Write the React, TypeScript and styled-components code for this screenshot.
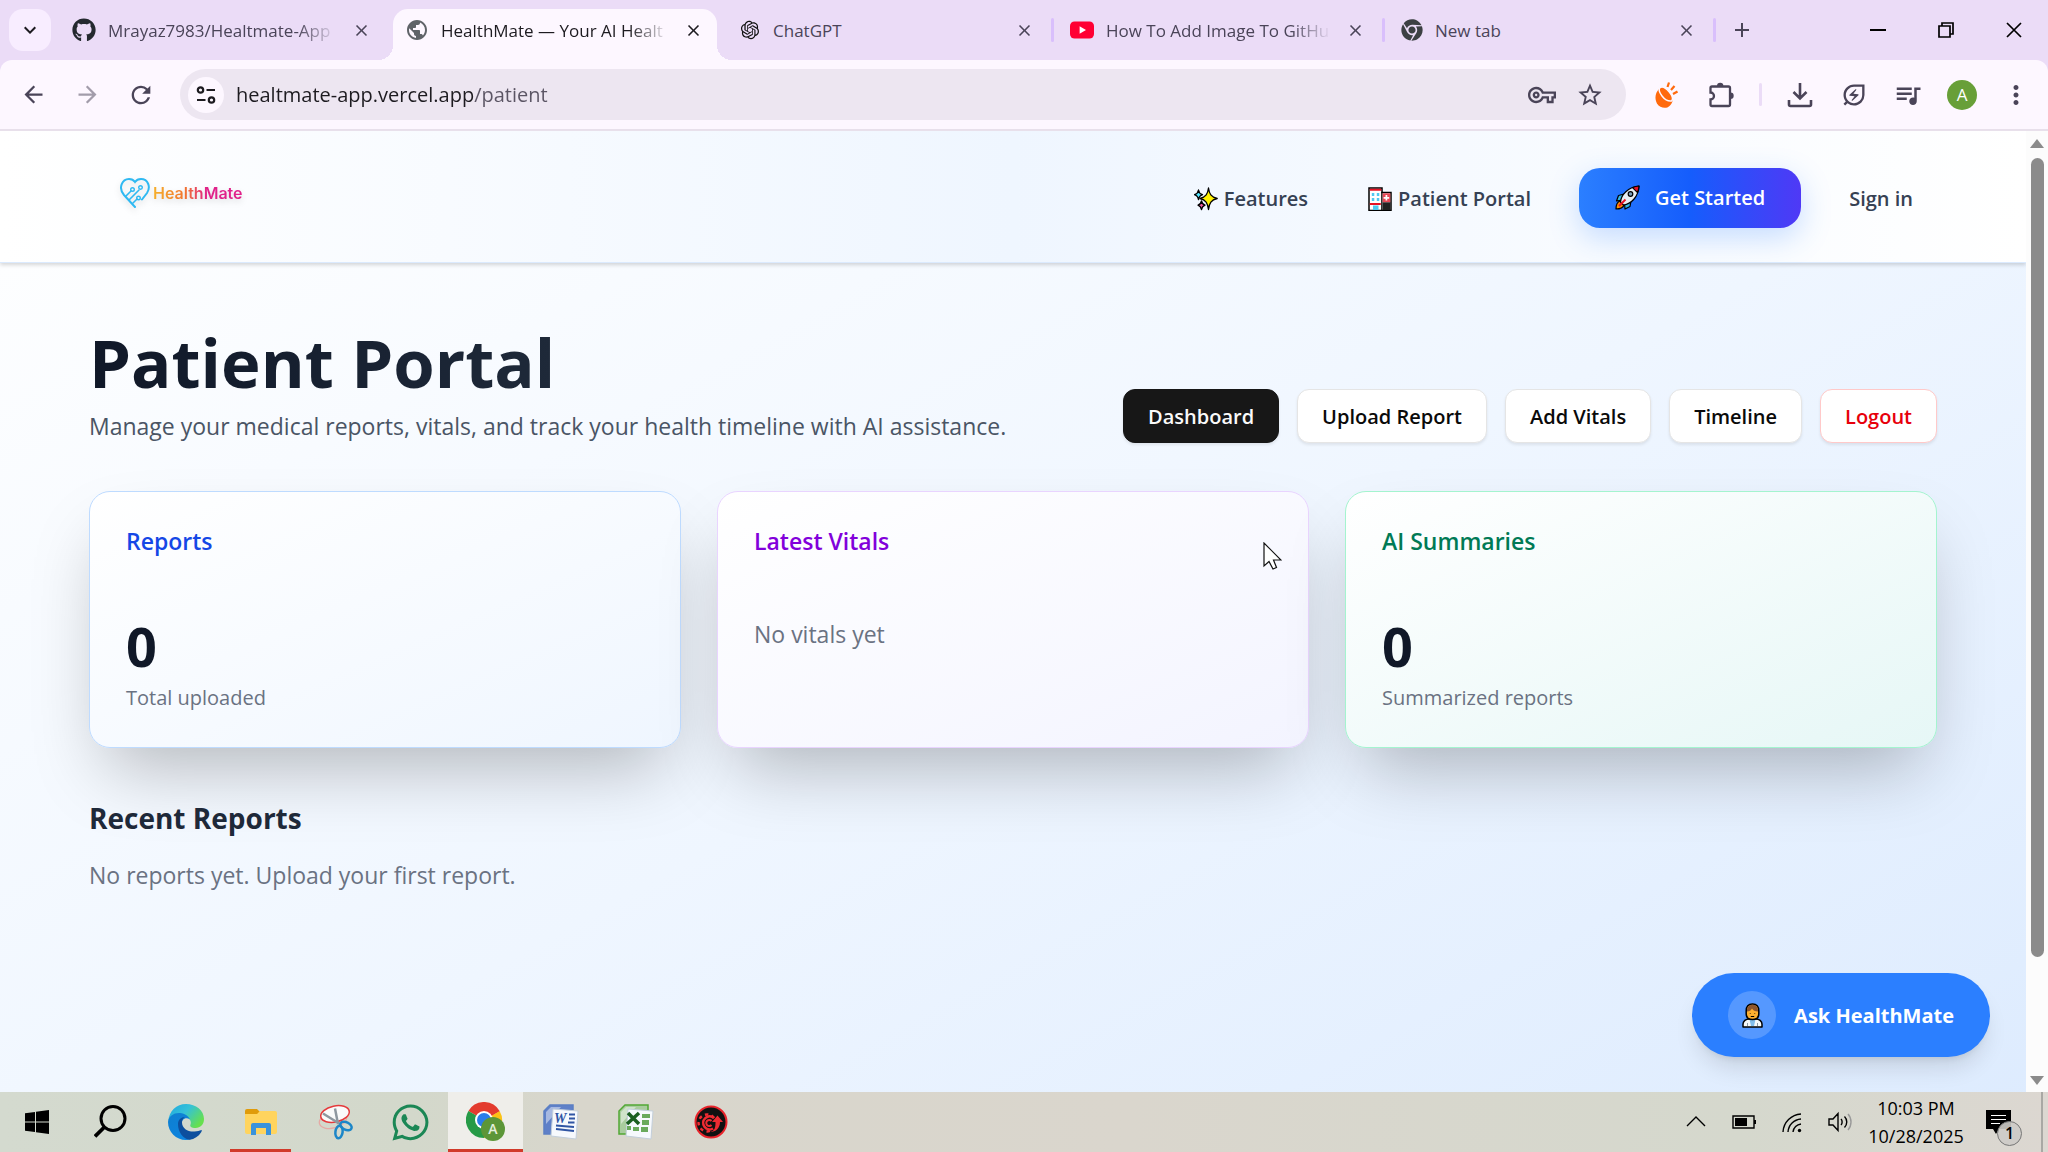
import React from 'react';
import styled, { createGlobalStyle, css } from 'styled-components';
import { FaGithub, FaChrome, FaWhatsapp } from 'react-icons/fa';
import { RiOpenaiFill } from 'react-icons/ri';
import {
  MdPublic, MdStarBorder, MdQueueMusic, MdMoreVert,
  MdRefresh, MdArrowBack, MdArrowForward,
  MdOutlineEnergySavingsLeaf, MdOutlineVpnKey, MdClose, MdAdd, MdKeyboardArrowDown,
} from 'react-icons/md';

const Global = createGlobalStyle`
  *, *::before, *::after { box-sizing: border-box; }
  html, body, #root { height: 100%; }
  body {
    margin: 0;
    overflow: hidden;
    font-family: 'Open Sans', 'Noto Sans', sans-serif;
  }
  button { font: inherit; border: 0; padding: 0; background: none; color: inherit; cursor: pointer; }
  a { color: inherit; text-decoration: none; }
  h1, h2, p { margin: 0; }
  svg { display: block; flex: none; }
`;

const Screen = styled.div`
  height: 100vh;
  display: flex;
  flex-direction: column;
`;

/* ---------- browser chrome ---------- */

const TabStrip = styled.header`
  height: 60px;
  flex: none;
  display: flex;
  background: #ebdcf7;
  color: #4a4458;
  font-size: 17px;
`;

const TabSearch = styled.button`
  width: 42px;
  height: 42px;
  margin: 9px;
  border-radius: 14px;
  background: #f8edff;
  color: #1d1b20;
  display: grid;
  place-items: center;
`;

const Tab = styled.div<{ $active?: boolean; $divider?: boolean }>`
  flex: 0 1 331px;
  min-width: 0;
  display: flex;
  align-items: center;
  gap: 12px;
  padding: 0 18px 0 12px;
  position: relative;
  ${p => p.$divider && css`
    padding-left: 16px;
    &::after {
      content: '';
      position: absolute;
      right: 0;
      top: 18px;
      width: 3px;
      height: 24px;
      border-radius: 2px;
      background: #d9bffc;
    }
  `}
  ${p => p.$active && css`
    margin: 9px 6px 0 2px;
    flex-basis: 324px;
    padding: 0 12px 9px;
    border-radius: 15px 15px 0 0;
    background: #fdf7ff;
    color: #1d1b20;
    &::before, &::after {
      content: '';
      position: absolute;
      bottom: 0;
      width: 15px;
      height: 15px;
    }
    &::before {
      left: -15px;
      background: radial-gradient(circle at 0 0, transparent 15px, #fdf7ff 15px);
    }
    &::after {
      right: -15px;
      background: radial-gradient(circle at 100% 0, transparent 15px, #fdf7ff 15px);
    }
  `}
`;

const TabTitle = styled.span<{ $fade?: boolean }>`
  flex: 1;
  min-width: 0;
  padding-top: 2px;
  overflow: hidden;
  white-space: nowrap;
  line-height: 24px;
  ${p => p.$fade && css`mask-image: linear-gradient(to right, #000 calc(100% - 40px), transparent);`}
`;

const TabClose = styled.button`
  width: 24px;
  height: 24px;
  display: grid;
  place-items: center;
`;

const NewTab = styled.button`
  width: 52px;
  display: grid;
  place-items: center;
`;

const WindowButtons = styled.div`
  margin-left: auto;
  display: flex;
  color: #000;
`;

const WindowButton = styled.button`
  width: 68px;
  display: grid;
  place-items: center;
`;

const ToolbarBack = styled.div`
  flex: none;
  background: #ebdcf7;
`;

const Toolbar = styled.div`
  height: 71px;
  display: flex;
  align-items: center;
  padding: 0 5px 0 6px;
  background: #fdf7ff;
  border-bottom: 2px solid #e8e0eb;
  border-radius: 12px 12px 0 0;
  color: #4a4458;
`;

const ToolButton = styled.button<{ $dim?: boolean }>`
  width: 54px;
  height: 48px;
  display: grid;
  place-items: center;
  opacity: ${p => (p.$dim ? 0.5 : 1)};
`;

const AddressBar = styled.label`
  flex: 1;
  height: 51px;
  margin: 0 14px 0 12px;
  padding: 0 12px 0 8px;
  border-radius: 26px;
  background: #ede6f1;
  display: flex;
  align-items: center;
`;

const SiteInfo = styled.span`
  width: 36px;
  height: 36px;
  border-radius: 50%;
  background: #fdf7ff;
  display: grid;
  place-items: center;
  color: #1d1b20;
`;

const UrlInput = styled.input`
  flex: 1;
  min-width: 0;
  height: 36px;
  margin-left: 12px;
  padding: 0;
  border: 0;
  outline: 0;
  font: 20px 'Open Sans', 'Noto Sans', sans-serif;
  background: linear-gradient(to right, #1d1b20 238px, #5b5564 238px);
  background-clip: text;
  color: transparent;
`;

const AddressButton = styled.button`
  width: 48px;
  height: 36px;
  display: grid;
  place-items: center;
`;

const ToolDivider = styled.span`
  width: 3px;
  height: 23px;
  margin: 0 11px;
  border-radius: 2px;
  background: #ebdcf7;
`;

const Avatar = styled.span`
  width: 30px;
  height: 30px;
  border-radius: 50%;
  background: #689f38;
  color: #fff;
  font-size: 17px;
  line-height: 30px;
  text-align: center;
`;

/* ---------- page ---------- */

const Viewport = styled.div`
  flex: 1;
  min-height: 0;
  display: flex;
  position: relative;
`;

const Page = styled.div`
  flex: 1;
  min-width: 0;
  overflow: hidden;
  background: linear-gradient(to bottom right, #fff, #eff6ff 50%, #dbeafe) 0 0 / 100% 115% no-repeat;
`;

const SiteHeader = styled.header`
  background: linear-gradient(to right, #fff, #eff6ff, #fff);
  border-bottom: 1px solid #dbeafe;
  box-shadow: 0 2px 4px rgba(0, 0, 0, 0.16);
`;

const Container = styled.div`
  max-width: 1920px;
  margin: 0 auto;
  padding: 0 36px;
`;

const HeaderRow = styled(Container)`
  height: 131px;
  display: flex;
  align-items: center;
  justify-content: space-between;
  padding-top: 2px;
`;

const Brand = styled.a`
  display: flex;
  align-items: center;
  gap: 3px;
  margin: 0 0 10px 31px;
  filter: drop-shadow(0 3px 3px rgba(0, 0, 0, 0.12));
`;

const BrandName = styled.span`
  font: 600 16px/24px Inter, sans-serif;
  background: linear-gradient(to right, #f5b02c, #f2762e 35%, #e0218a 60%, #e0218a);
  background-clip: text;
  color: transparent;
`;

const Nav = styled.nav`
  display: flex;
  align-items: center;
  gap: 36px;
  padding-right: 12px;
  font-size: 20px;
  line-height: 30px;
  font-weight: 600;
  color: #364153;
`;

const NavLink = styled.a`
  display: flex;
  align-items: center;
  gap: 6px;
  padding: 13px 12px 11px;
  white-space: nowrap;
`;

const StartLink = styled.a`
  display: flex;
  align-items: center;
  gap: 15px;
  height: 60px;
  padding: 0 36px;
  border-radius: 21px;
  background: linear-gradient(to right, #2b7fff, #155dfc 50%, #4f39f6);
  box-shadow: 0 10px 30px rgba(43, 127, 255, 0.25);
  color: #fff;
  white-space: nowrap;
`;

const PortalHead = styled.div`
  display: flex;
  align-items: flex-end;
  justify-content: space-between;
  margin: 57px 0 48px;
`;

const Title = styled.h1`
  width: fit-content;
  margin-bottom: 6px;
  font-size: 67px;
  line-height: 84px;
  font-weight: 700;
  background: linear-gradient(to right, #101828, #1e2939);
  background-clip: text;
  color: transparent;
`;

const Subtitle = styled.p`
  font-size: 23px;
  line-height: 33px;
  color: #4a5565;
`;

const Actions = styled.div`
  display: flex;
  gap: 18px;
`;

const ActionButton = styled.button<{ $tone?: 'solid' | 'danger' }>`
  height: 54px;
  padding: 0 24px;
  border-radius: 12px;
  border: 1px solid #e5e5e5;
  background: #fff;
  color: #0a0a0a;
  font-size: 20px;
  font-weight: 600;
  white-space: nowrap;
  box-shadow: 0 2px 3px rgba(0, 0, 0, 0.08);
  ${p => p.$tone === 'solid' && css`background: #171717; border-color: #171717; color: #fafafa;`}
  ${p => p.$tone === 'danger' && css`border-color: #ffc9c9; color: #e7000b;`}
`;

const Cards = styled.div`
  display: grid;
  grid-template-columns: repeat(3, 1fr);
  gap: 36px;
`;

const Card = styled.section<{ $edge: string; $end: string }>`
  min-height: 257px;
  padding: 31px 36px 28px;
  border: 1px solid ${p => p.$edge};
  border-radius: 21px;
  background: linear-gradient(to bottom right, #fff, ${p => p.$end});
  box-shadow: 0 36px 72px -18px rgba(0, 0, 0, 0.27);
`;

const CardTitle = styled.h2<{ $color: string }>`
  font-size: 23px;
  line-height: 36px;
  font-weight: 600;
  color: ${p => p.$color};
  margin-bottom: 55px;
`;

const Figure = styled.p`
  font-size: 54px;
  line-height: 64px;
  font-weight: 700;
  color: #101828;
`;

const FigureLabel = styled.p`
  font-size: 20px;
  line-height: 40px;
  color: #6a7282;
`;

const Note = styled.p`
  font-size: 23px;
  line-height: 40px;
  color: #6a7282;
`;

const SectionTitle = styled.h2`
  margin: 51px 0 18px;
  font-size: 28px;
  line-height: 38px;
  font-weight: 700;
  color: #1e2939;
`;

const AskButton = styled.button`
  position: absolute;
  right: 58px;
  bottom: 35px;
  height: 84px;
  padding: 0 36px;
  border-radius: 42px;
  background: #2b7fff;
  box-shadow: 0 15px 23px -5px rgba(0, 0, 0, 0.12), 0 6px 9px -6px rgba(0, 0, 0, 0.12);
  color: #fff;
  font-size: 20px;
  font-weight: 700;
  display: flex;
  align-items: center;
  gap: 18px;
  white-space: nowrap;
`;

const AskBadge = styled.span`
  width: 48px;
  height: 48px;
  border-radius: 50%;
  background: rgba(255, 255, 255, 0.2);
  display: grid;
  place-items: center;
`;

const Pointer = styled.svg`
  position: absolute;
  left: 1263px;
  top: 411px;
`;

const ScrollBar = styled.div`
  width: 22px;
  flex: none;
  background: #fcfcfc;
  display: flex;
  flex-direction: column;
  align-items: center;
  padding: 8px 0 7px;
`;

const Track = styled.div`
  flex: 1;
  width: 13px;
  margin: 10px 0;
`;

const Thumb = styled.div`
  height: 88%;
  border-radius: 7px;
  background: #8b8b8b;
`;

/* ---------- taskbar ---------- */

const Taskbar = styled.footer`
  height: 60px;
  flex: none;
  display: flex;
  background: linear-gradient(to right, #d4dacf, #d3d8cb 20%, #d8d6cc 28%, #dad6cd 55%, #d5d8cd 85%, #dcd7d1);
  color: #000;
`;

const TaskButton = styled.button<{ $open?: boolean; $active?: boolean; $narrow?: boolean }>`
  width: ${p => (p.$narrow ? 73 : 75)}px;
  display: grid;
  place-items: center;
  ${p => p.$open && css`
    background: linear-gradient(#d13a2a, #d13a2a) center bottom / 61px 3px no-repeat;
  `}
  ${p => p.$active && css`
    background: #efeeea;
    border-bottom: 3px solid #d13a2a;
    padding-top: 3px;
  `}
`;

const Tray = styled.div`
  margin-left: auto;
  display: flex;
  align-items: center;
`;

const TrayButton = styled.button`
  width: 48px;
  height: 60px;
  display: grid;
  place-items: center;
`;

const Clock = styled.div`
  width: 104px;
  text-align: center;
  font-size: 18px;
  line-height: 28px;
`;

const NoticeButton = styled.button`
  width: 73px;
  height: 60px;
  padding-right: 12px;
  display: grid;
  place-items: center;
  position: relative;
`;

const NoticeCount = styled.span`
  position: absolute;
  left: 29px;
  top: 29px;
  width: 25px;
  height: 25px;
  border: 1px solid #777;
  border-radius: 50%;
  background: rgba(205, 203, 198, 0.9);
  font-size: 16px;
  line-height: 23px;
  font-weight: 600;
  text-align: center;
`;

const ShowDesktop = styled.button`
  width: 7px;
  height: 60px;
  border-left: 2px solid #a9a8a4;
`;

/* ---------- drawings ---------- */

const YouTubeIcon = () => (
  <svg width="24" height="24" viewBox="0 0 24 24">
    <rect x="0" y="3.500" width="24" height="17" rx="4.500" fill="#ff0033" />
    <path d="M9.600 8.200 16 12l-6.400 3.800z" fill="#fff" />
  </svg>
);

const TuneIcon = () => (
  <svg width="20" height="20" viewBox="0 0 20 20" fill="none" stroke="currentColor" strokeWidth="2.200">
    <circle cx="4.500" cy="5" r="2.700" />
    <path d="M10.500 5H19M1 15h8.500" />
    <circle cx="15.500" cy="15" r="2.700" />
  </svg>
);

const CarrotIcon = () => (
  <svg width="24" height="28" viewBox="0 0 24 28">
    <path d="M4 8C0 12-.5 18 2 22.500c3 5 9.500 5.500 12.500 2.500 2.500-2.500 3.500-5 3-8z" fill="#ff6a0d" />
    <path d="M5 6.500c-3 3.500 4.500 14.500 11.500 13.500C20.500 16.500 10 3.500 5 6.500z" fill="#ff6a0d" stroke="#fdf7ff" strokeWidth="1.500" />
    <path d="M12.500 6l1.500-4.500M16 9l3.500-4M18 13l4.500-2.500" stroke="#ff6a0d" strokeWidth="2.200" />
  </svg>
);

const PuzzleIcon = () => (
  <svg width="28" height="26" viewBox="0 0 28 26">
    <path
      d="M5 4.500h16.500a1.500 1.500 0 0 1 1.500 1.500v16.500a1.500 1.500 0 0 1-1.500 1.500H5a1.500 1.500 0 0 1-1.500-1.500V17.500a3.500 3.500 0 0 0 0-7V6A1.500 1.500 0 0 1 5 4.500z"
      fill="none" stroke="currentColor" strokeWidth="2.300"
    />
    <path d="M10 4a3.200 3.200 0 0 1 6.400 0zM23.500 10.500a3.200 3.200 0 0 1 0 6.400z" fill="currentColor" />
  </svg>
);

const DownloadIcon = () => (
  <svg width="26" height="26" viewBox="0 0 26 26" fill="none" stroke="currentColor" strokeWidth="2.600">
    <path d="M13 1v15M6.500 10l6.500 6.500 6.500-6.500M2 18v4.500A1.500 1.500 0 0 0 3.500 24h19a1.500 1.500 0 0 0 1.500-1.500V18" />
  </svg>
);

const HeartLogo = () => (
  <svg width="30" height="31" viewBox="0 0 30 31" fill="none" stroke="#2fb9f2" strokeWidth="2" strokeLinecap="round">
    <path d="M15 30 4 18C-2 11 2 2 9 2c3 0 5 1.500 6 3 1-1.500 3-3 6-3 7 0 10 8 6 14l-5 6.500" />
    <path d="M6 19l5-5M9 23 19 13M13 26l4-4" strokeWidth="1.600" />
    <circle cx="12.500" cy="12.500" r="1.800" strokeWidth="1.400" />
    <circle cx="20.500" cy="10.500" r="1.800" strokeWidth="1.400" />
    <circle cx="18.500" cy="21" r="1.800" strokeWidth="1.400" />
  </svg>
);

const Sparkles = () => (
  <svg width="24" height="24" viewBox="0 0 24 24" stroke="#000" strokeWidth="1.300" strokeLinejoin="round">
    <path d="M14.500 1c.8 6 2.500 9 8.700 10.500-6 1.500-7.900 4.500-8.700 11-.8-6.500-2.700-9.500-8.500-11C12 10 13.700 7 14.500 1z" fill="#fff100" />
    <path d="M4.500 3c.5 3 1.500 4 4 4.700-2.500.8-3.500 2-4 5-.5-3-1.500-4.200-4-5C3 7 4 6 4.500 3z" fill="#50e6ff" />
    <path d="M7.500 14c.5 2.500 1.300 3.500 3.500 4.200-2.200.8-3 1.800-3.500 4.300-.5-2.500-1.300-3.500-3.500-4.300C6.200 17.500 7 16.500 7.500 14z" fill="#ef5aa0" />
  </svg>
);

const Hospital = () => (
  <svg width="24" height="24" viewBox="0 0 24 24">
    <path d="M1 1h13v4.500h9V23.500H1z" fill="#fff" stroke="#000" strokeWidth="1.500" />
    <path d="M1.800 1.800h11.500v2H1.800zM1.800 16h11v2h-11z" fill="#e81224" />
    <path d="M14.500 6.300h7.800v9h-7.800z" fill="#e74856" />
    <path d="M14.500 15.300h7.800V23h-7.800z" fill="#222" />
    <path d="M18.400 8v5.600M15.600 10.800h5.600" stroke="#fff" strokeWidth="1.700" />
    <path d="M3.800 6h2.500v3H3.800zM8.800 6h2.500v3H8.800zM3.800 11h2.500v3H3.800zM8.800 11h2.500v3H8.800zM5 18.500h5.500V23H5z" fill="#50c8f0" />
    <path d="M13.800 5v18.500" stroke="#000" strokeWidth="1.200" />
  </svg>
);

const Rocket = () => (
  <svg width="25" height="25" viewBox="0 0 25 25" stroke="#000" strokeWidth="1.200" strokeLinejoin="round">
    <path d="M5 16c-3 1-4 5-4 8 4 0 7-1 8-4z" fill="#ff8c00" />
    <path d="M9 9 3.500 10.500 1.500 16 7 15zM16 16l-1 5.500L10 24l-.5-6z" fill="#33b5e5" />
    <path d="M5.500 17C6 10 13 2 24 1c-.5 11-8 18-15.500 19z" fill="#e8eef2" />
    <path d="M17.500 2.600C19.500 1.700 22 1.200 24 1c-.1 2.500-.6 4.700-1.500 6.600z" fill="#e81224" />
    <circle cx="15.500" cy="9" r="2.300" fill="#7a9db8" />
    <path d="m4 21 6.500-6.500" stroke="#e81224" strokeWidth="2" />
  </svg>
);

const Doctor = () => (
  <svg width="21" height="25" viewBox="0 0 21 25" stroke="#000" strokeWidth="1.500" strokeLinejoin="round">
    <path d="M1 24v-3c0-3 3-5 6-5h7c3 0 6 2 6 5v3z" fill="#f5f8fa" />
    <path d="M7.500 16.500h6L12 23H9z" fill="#83beec" stroke="none" />
    <path d="M5.500 20v3M15.500 20v3" stroke="#8a9aa5" strokeWidth="1" />
    <path d="M4.200 8c0-4.500 2.600-7 6.300-7s6.300 2.500 6.300 7v3c0 3.500-2.600 5.500-6.300 5.500S4.200 14.500 4.200 11z" fill="#ffb02e" />
    <path d="M5 8.500C4.800 4 7 1.800 10.500 1.800S16.200 4 16 8.500c-3 0-5-1-6-3-1 2-2.500 3-5 3z" fill="#8e562e" stroke="none" />
    <path d="M8.300 10.500v.6M12.700 10.500v.6M8.800 13.500h3.400" strokeWidth="1.200" />
  </svg>
);

const SearchIcon = () => (
  <svg width="34" height="34" viewBox="0 0 34 34" fill="none" stroke="#000">
    <circle cx="19" cy="13.500" r="12" strokeWidth="3" />
    <path d="M10.500 22 1 31.500" strokeWidth="3.800" />
  </svg>
);

const WindowsIcon = () => (
  <svg width="24" height="24" viewBox="0 0 24 24">
    <path d="M0 3.300 10 2v9.500H0zM11 1.800 24 0v11.500H11zM0 12.500h10V22L0 20.700zM11 12.500h13V24l-13-1.800z" />
  </svg>
);

const EdgeIcon = () => (
  <svg width="36" height="36" viewBox="0 0 36 36">
    <defs>
      <linearGradient id="edgeTop" x1="0" y1="0" x2="1" y2=".6">
        <stop offset="0" stopColor="#1ea7e0" /><stop offset=".5" stopColor="#35c1d8" /><stop offset="1" stopColor="#66e04e" />
      </linearGradient>
      <linearGradient id="edgeLeft" x1="0" y1="0" x2=".7" y2="1">
        <stop offset="0" stopColor="#0f7fd0" /><stop offset="1" stopColor="#0c84e0" />
      </linearGradient>
    </defs>
    <path d="M.3 17C1 7 8.500 0 18 0c10 0 18 6.500 18 15 0 5.500-3.500 9-8.500 9-4 0-6-1.300-5-3.500C24 17 21 13.500 17 12 10 9.500 3 11 .3 17z" fill="url(#edgeTop)" />
    <path d="M0 18c.5-6 6-9.500 12-9 5 .5 9 3.500 10 6.500-4-3-8.500-.5-8.500 4.500C13.500 27 20 31.500 27 33c-2.500 2-6 3-9 3C8 36 0 28 0 18z" fill="url(#edgeLeft)" />
    <path d="M10 20c0-4 3-7 7-7-2 1-3 3-3 5.500 0 6 6 9.500 12.500 9 3 0 5-1 7-1.500.8.500 0 1.500-.5 2.500-2.500 4-6.500 6.500-11.500 7.300C15 35 10 28 10 20z" fill="#0d4f9e" />
  </svg>
);

const ExplorerIcon = () => (
  <svg width="32" height="28" viewBox="0 0 32 28">
    <path d="M0 3a2 2 0 0 1 2-2h10l3 3-2 3H0z" fill="#e09b0a" />
    <path d="M0 6h12l3-3h15a2 2 0 0 1 2 2v19a2 2 0 0 1-2 2H2a2 2 0 0 1-2-2z" fill="#ffd45e" />
    <path d="M6 17a2 2 0 0 1 2-2h16a2 2 0 0 1 2 2v10h-5v-7H11v7H6z" fill="#3a93dc" />
  </svg>
);

const SnipIcon = () => (
  <svg width="36" height="36" viewBox="0 0 36 36" fill="none">
    <ellipse cx="15" cy="16" rx="14" ry="8" transform="rotate(-15 15 16)" stroke="#e5aaa5" strokeWidth="1.300" />
    <ellipse cx="17" cy="10" rx="14.500" ry="8" transform="rotate(-12 17 10)" fill="#fafafa" stroke="#e5393b" strokeWidth="1.500" />
    <path d="M17 4.500 20 20M5 9.500 22 20" stroke="#8e979f" strokeWidth="2.500" />
    <ellipse cx="28" cy="22" rx="6" ry="3.800" transform="rotate(25 28 22)" stroke="#1c86c8" strokeWidth="2.500" />
    <ellipse cx="21" cy="28" rx="3.600" ry="6.200" transform="rotate(8 21 28)" stroke="#1c86c8" strokeWidth="2.500" />
  </svg>
);

const ChromeIcon = () => (
  <svg width="40" height="40" viewBox="0 0 40 40">
    <path d="M18 18 2.400 9A18 18 0 0 1 33.600 9z" fill="#e33b2e" />
    <path d="M18 18 33.600 9A18 18 0 0 1 18 36z" fill="#fbc116" />
    <path d="M18 18v18A18 18 0 0 1 2.400 9z" fill="#269a47" />
    <path d="M18 9h15.600L18 18z" fill="#e33b2e" />
    <circle cx="18" cy="18" r="9" fill="#fff" />
    <circle cx="18" cy="18" r="7" fill="#2a7de9" />
    <circle cx="27" cy="27" r="12" fill="#5c9638" />
    <text x="27" y="32" fontSize="14" fontWeight="600" fill="#e4efdc" textAnchor="middle">A</text>
  </svg>
);

const OfficeIcon = ({ kind }: { kind: 'word' | 'excel' }) => {
  const word = kind === 'word';
  const ink = word ? '#2f55a4' : '#2e7d32';
  return (
    <svg width="36" height="36" viewBox="0 0 36 36">
      <path d="M7 1h23v29H1V7z" fill={word ? '#5f80c8' : '#a9cc9e'} stroke={word ? '#5b7fc4' : '#51a835'} strokeWidth="1.500" />
      <path d="M3 8 8 3h10L3 20z" fill="#fff" opacity=".45" />
      <path d="m10 5 25 2-2 28-25-3z" fill="#f6f9fd" stroke="#c3cfdb" />
      {word ? (
        <>
          <path d="M26 10.500h6M26 14.500h6M25 18.500h6.500M13 21.500l18 1.500M13 25l18 2" stroke={ink} strokeWidth="2" />
          <text x="11" y="19" fontSize="14" fontWeight="700" fontStyle="italic" fontFamily="Liberation Serif, serif" fill={ink}>W</text>
        </>
      ) : (
        <>
          <path d="M24 10h8v4h-8zM24 16h7v5h-7zM23 23h7v5h-7zM15 23h6v4h-6zM9 22h4v4H9z" fill="#6aaa5c" />
          <path d="m10 9 11 11M21 9 9 20" stroke="#1b5e20" strokeWidth="3.500" />
        </>
      )}
    </svg>
  );
};

const GearIcon = () => (
  <svg width="34" height="34" viewBox="0 0 34 34" fill="none">
    <circle cx="17" cy="17" r="15.500" fill="#111" stroke="#e8242b" strokeWidth="2" />
    <path d="M20 13a6.500 6.500 0 1 0-1 10.500" stroke="#ef2b32" strokeWidth="2.600" />
    <path d="M20 13a8.500 8.500 0 1 0-1 11" stroke="#ef2b32" strokeWidth="2.500" strokeDasharray="3.400 3.400" />
    <path d="M17.500 16a3 3 0 1 0 0 4" stroke="#ef2b32" strokeWidth="2" />
    <path d="M16 27c5-1 5.500-5 5.500-10H18l5.500-6.500L29 17h-3c0 6-4 10-10 10z" fill="#ef2b32" />
  </svg>
);

const TrayIcon = ({ kind }: { kind: 'up' | 'battery' | 'wifi' | 'sound' }) => (
  <svg width="24" height="24" viewBox="0 0 24 24" fill="none" stroke="#000" strokeWidth="1.400">
    {kind === 'up' && <path d="m3 16 9-9 9 9" />}
    {kind === 'battery' && (
      <>
        <path d="M1 6h21v12H1zM23.300 10v4" />
        <path d="M3 8h12v8H3z" fill="#000" stroke="none" />
      </>
    )}
    {kind === 'wifi' && (
      <>
        <path d="M3 22A19 19 0 0 1 21 4M8 22A14 14 0 0 1 21 9M13 22a9 9 0 0 1 8-8" />
        <circle cx="19.500" cy="20.500" r="1.700" fill="#000" stroke="none" />
      </>
    )}
    {kind === 'sound' && (
      <>
        <path d="M1 9h4l5-5.500v17L5 15H1zM13 9c1.500 1.500 1.500 4.500 0 6M16.500 6.500c3 3 3 8 0 11" />
        <path d="M20 4c4 4.500 4 11.500 0 16" stroke="#999" />
      </>
    )}
  </svg>
);

/* ---------- data ---------- */

const tabs = [
  { title: 'Mrayaz7983/Healtmate-App', icon: <FaGithub size={24} color="#24292f" />, fade: true },
  { title: 'HealthMate — Your AI Healt', icon: <MdPublic size={24} color="#5f6368" />, active: true, fade: true },
  { title: 'ChatGPT', icon: <RiOpenaiFill size={22} color="#111" />, divider: true },
  { title: 'How To Add Image To GitHu', icon: <YouTubeIcon />, divider: true, fade: true },
  { title: 'New tab', icon: <FaChrome size={22} color="#3c4043" />, divider: true },
];

const taskApps = [
  { label: 'Start', icon: <WindowsIcon />, narrow: true },
  { label: 'Search', icon: <SearchIcon /> },
  { label: 'Edge', icon: <EdgeIcon /> },
  { label: 'File Explorer', icon: <ExplorerIcon />, open: true },
  { label: 'Snipping Tool', icon: <SnipIcon /> },
  { label: 'WhatsApp', icon: <FaWhatsapp size={41} color="#1b8755" /> },
  { label: 'Chrome', icon: <ChromeIcon />, active: true },
  { label: 'Word', icon: <OfficeIcon kind="word" /> },
  { label: 'Excel', icon: <OfficeIcon kind="excel" /> },
  { label: 'Driver tool', icon: <GearIcon /> },
];

const BrowserChrome = () => (
  <>
    <TabStrip>
      <TabSearch aria-label="Search tabs"><MdKeyboardArrowDown size={24} /></TabSearch>
      {tabs.map(t => (
        <Tab key={t.title} $active={t.active} $divider={t.divider}>
          {t.icon}
          <TabTitle $fade={t.fade}>{t.title}</TabTitle>
          <TabClose aria-label={`Close ${t.title}`}><MdClose size={19} /></TabClose>
        </Tab>
      ))}
      <NewTab aria-label="New tab"><MdAdd size={24} /></NewTab>
      <WindowButtons>
        <WindowButton aria-label="Minimize">
          <svg width="16" height="16" viewBox="0 0 16 16"><path d="M0 7h16v2H0z" /></svg>
        </WindowButton>
        <WindowButton aria-label="Restore">
          <svg width="16" height="16" viewBox="0 0 16 16" fill="none" stroke="#000" strokeWidth="1.700">
            <path d="M1 4h11v11H1zM4 4V1h11v11h-3" />
          </svg>
        </WindowButton>
        <WindowButton aria-label="Close window">
          <svg width="16" height="16" viewBox="0 0 16 16" stroke="#000" strokeWidth="1.700"><path d="m1 1 14 14M15 1 1 15" /></svg>
        </WindowButton>
      </WindowButtons>
    </TabStrip>
    <ToolbarBack>
      <Toolbar>
        <ToolButton aria-label="Back"><MdArrowBack size={27} /></ToolButton>
        <ToolButton aria-label="Forward" $dim><MdArrowForward size={27} /></ToolButton>
        <ToolButton aria-label="Reload"><MdRefresh size={28} /></ToolButton>
        <AddressBar>
          <SiteInfo><TuneIcon /></SiteInfo>
          <UrlInput aria-label="Address" defaultValue="healtmate-app.vercel.app/patient" />
          <AddressButton aria-label="Passwords"><MdOutlineVpnKey size={28} /></AddressButton>
          <AddressButton aria-label="Bookmark"><MdStarBorder size={28} /></AddressButton>
        </AddressBar>
        <ToolButton aria-label="Extension"><CarrotIcon /></ToolButton>
        <ToolButton aria-label="Extensions"><PuzzleIcon /></ToolButton>
        <ToolDivider />
        <ToolButton aria-label="Downloads"><DownloadIcon /></ToolButton>
        <ToolButton aria-label="Energy saver"><MdOutlineEnergySavingsLeaf size={28} /></ToolButton>
        <ToolButton aria-label="Media"><MdQueueMusic size={30} /></ToolButton>
        <ToolButton aria-label="Profile"><Avatar>A</Avatar></ToolButton>
        <ToolButton aria-label="Menu"><MdMoreVert size={30} /></ToolButton>
      </Toolbar>
    </ToolbarBack>
  </>
);

const App = () => (
  <Screen>
    <Global />
    <BrowserChrome />
    <Viewport>
      <Page>
        <SiteHeader>
          <HeaderRow>
            <Brand href="#"><HeartLogo /><BrandName>HealthMate</BrandName></Brand>
            <Nav>
              <NavLink href="#"><Sparkles />Features</NavLink>
              <NavLink href="#"><Hospital />Patient Portal</NavLink>
              <StartLink href="#"><Rocket />Get Started</StartLink>
              <NavLink href="#">Sign in</NavLink>
            </Nav>
          </HeaderRow>
        </SiteHeader>
        <Container as="main">
          <PortalHead>
            <div>
              <Title>Patient Portal</Title>
              <Subtitle>Manage your medical reports, vitals, and track your health timeline with AI assistance.</Subtitle>
            </div>
            <Actions>
              <ActionButton $tone="solid">Dashboard</ActionButton>
              <ActionButton>Upload Report</ActionButton>
              <ActionButton>Add Vitals</ActionButton>
              <ActionButton>Timeline</ActionButton>
              <ActionButton $tone="danger">Logout</ActionButton>
            </Actions>
          </PortalHead>
          <Cards>
            <Card $edge="#bedbff" $end="#eff6ff">
              <CardTitle $color="#1447e6">Reports</CardTitle>
              <Figure>0</Figure>
              <FigureLabel>Total uploaded</FigureLabel>
            </Card>
            <Card $edge="#e9d4ff" $end="#f3f4ff">
              <CardTitle $color="#8200db">Latest Vitals</CardTitle>
              <Note>No vitals yet</Note>
            </Card>
            <Card $edge="#a4f4cf" $end="#e6f7f6">
              <CardTitle $color="#007a55">AI Summaries</CardTitle>
              <Figure>0</Figure>
              <FigureLabel>Summarized reports</FigureLabel>
            </Card>
          </Cards>
          <SectionTitle>Recent Reports</SectionTitle>
          <Note>No reports yet. Upload your first report.</Note>
        </Container>
      </Page>
      <ScrollBar aria-hidden="true">
        <svg width="14" height="9" viewBox="0 0 14 9"><path d="M7 0l7 9H0z" fill="#8b8b8b" /></svg>
        <Track><Thumb /></Track>
        <svg width="14" height="9" viewBox="0 0 14 9"><path d="M0 0h14L7 9z" fill="#8b8b8b" /></svg>
      </ScrollBar>
      <AskButton><AskBadge><Doctor /></AskBadge>Ask HealthMate</AskButton>
      <Pointer width="19" height="28" viewBox="0 0 19 28">
        <path d="M1 1v23l5-4.500L10 27l3.500-1.500L10.500 18H18z" fill="#fff" stroke="#111" strokeWidth="1.200" />
      </Pointer>
    </Viewport>
    <Taskbar>
      {taskApps.map(a => (
        <TaskButton key={a.label} aria-label={a.label} $open={a.open} $active={a.active} $narrow={a.narrow}>
          {a.icon}
        </TaskButton>
      ))}
      <Tray>
        <TrayButton aria-label="Hidden icons"><TrayIcon kind="up" /></TrayButton>
        <TrayButton aria-label="Battery"><TrayIcon kind="battery" /></TrayButton>
        <TrayButton aria-label="Network"><TrayIcon kind="wifi" /></TrayButton>
        <TrayButton aria-label="Volume"><TrayIcon kind="sound" /></TrayButton>
        <Clock>10:03 PM<br />10/28/2025</Clock>
        <NoticeButton aria-label="Notifications">
          <svg width="25" height="24" viewBox="0 0 25 24">
            <path d="M0 0h25v19H13l-3 5-3-5H0z" />
            <path d="M5 5.500h15M5 9.500h15M5 13.500h9" stroke="#fff" strokeWidth="1.200" />
          </svg>
          <NoticeCount>1</NoticeCount>
        </NoticeButton>
        <ShowDesktop aria-label="Show desktop" />
      </Tray>
    </Taskbar>
  </Screen>
);

export default App;
